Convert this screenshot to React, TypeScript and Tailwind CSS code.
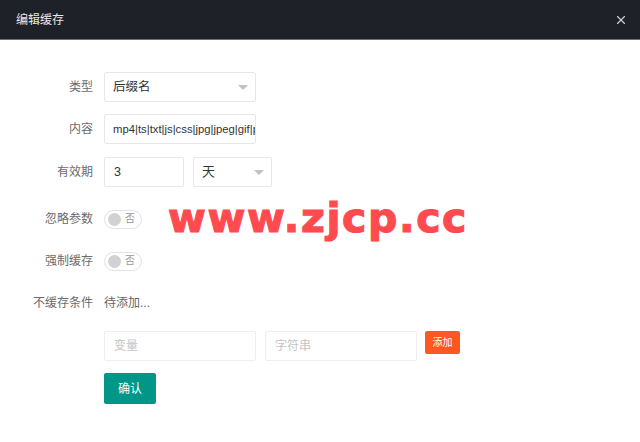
import React from 'react';
import { X } from 'lucide-react';

const font = "font-['Liberation_Sans','Noto_Sans_CJK_SC',sans-serif]";

const Label: React.FC<{ text: string }> = ({ text }) => (
  <div className="w-[93px] shrink-0 text-right text-[12px] text-[#6b6b6b]">{text}</div>
);

const Arrow = () => (
  <span className="w-0 h-0 border-x-[5px] border-t-[5px] border-x-transparent border-t-[#c2c2c2]" />
);

const Switch: React.FC = () => (
  <div className="flex items-center h-[19px] w-[38px] rounded-full border border-[#e2e2e2] pl-[3px] gap-[4px]">
    <span className="w-[13px] h-[13px] rounded-full bg-[#d2d2d2]" />
    <span className="text-[10px] text-[#999] leading-none">否</span>
  </div>
);

export default function App() {
  return (
    <div className={`relative w-[640px] h-[442px] bg-white overflow-hidden ${font}`}>
      {/* Header */}
      <div className="flex items-center justify-between h-[40px] bg-[#1f2129] border-b border-[#6b6d72] pl-[16px] pr-[12px]">
        <span className="text-[12px] text-[#e8e8e8]">编辑缓存</span>
        <X className="w-[14px] h-[14px] text-[#d0d0d0]" strokeWidth={2} />
      </div>

      {/* Form */}
      <div className="flex flex-col">
        <div className="flex items-center gap-[11px] h-[30px] mt-[32px]">
          <Label text="类型" />
          <div className="flex items-center justify-between w-[152px] h-[30px] border border-[#e6e6e6] rounded-[2px] pl-[8px] pr-[7px]">
            <span className="text-[12.5px] text-[#333]">后缀名</span>
            <Arrow />
          </div>
        </div>

        <div className="flex items-center gap-[11px] h-[30px] mt-[12px]">
          <Label text="内容" />
          <div className="flex items-center w-[152px] h-[30px] border border-[#e6e6e6] rounded-[2px] pl-[8px] overflow-hidden whitespace-nowrap">
            <span className="text-[11.3px] text-[#333]">mp4|ts|txt|js|css|jpg|jpeg|gif|png|bmp</span>
          </div>
        </div>

        <div className="flex items-center gap-[11px] h-[30px] mt-[13px]">
          <Label text="有效期" />
          <div className="flex items-center w-[80px] h-[30px] border border-[#e6e6e6] rounded-[2px] pl-[9px]">
            <span className="text-[12.5px] text-[#333]">3</span>
          </div>
          <div className="flex items-center justify-between w-[79px] h-[30px] border border-[#e6e6e6] rounded-[2px] pl-[8px] pr-[7px] ml-[-2px]">
            <span className="text-[13px] text-[#333]">天</span>
            <Arrow />
          </div>
        </div>

        <div className="flex items-center gap-[11px] h-[30px] mt-[17px]">
          <Label text="忽略参数" />
          <Switch />
        </div>

        <div className="flex items-center gap-[11px] h-[30px] mt-[12px]">
          <Label text="强制缓存" />
          <Switch />
        </div>

        <div className="flex items-center gap-[11px] h-[30px] mt-[12px]">
          <Label text="不缓存条件" />
          <span className="text-[12px] text-[#666]">待添加...</span>
        </div>

        <div className="flex items-start h-[30px] mt-[13px] pl-[104px]">
          <div className="flex items-center w-[152px] h-[30px] border border-[#eee] rounded-[2px] pl-[9px]">
            <span className="text-[12px] text-[#c4c4c4]">变量</span>
          </div>
          <div className="flex items-center w-[152px] h-[30px] border border-[#eee] rounded-[2px] pl-[9px] ml-[9px]">
            <span className="text-[12px] text-[#c4c4c4]">字符串</span>
          </div>
          <button className="flex items-center justify-center w-[35px] h-[23px] bg-[#ff5722] text-white text-[10px] rounded-[2px] ml-[8px]">
            添加
          </button>
        </div>

        <div className="flex h-[31px] mt-[12px] pl-[104px]">
          <button className="w-[52px] h-[31px] bg-[#009688] text-white text-[12px] rounded-[2px]">
            确认
          </button>
        </div>
      </div>

      {/* Watermark */}
      <div className="absolute left-[168px] top-[198px] font-['DejaVu_Sans',sans-serif] font-bold text-[41px] tracking-[1.6px] leading-none text-[#ff4b4f] [-webkit-text-stroke:1.2px_#ff4b4f] whitespace-nowrap">
        www.zjcp.cc
      </div>
    </div>
  );
}
